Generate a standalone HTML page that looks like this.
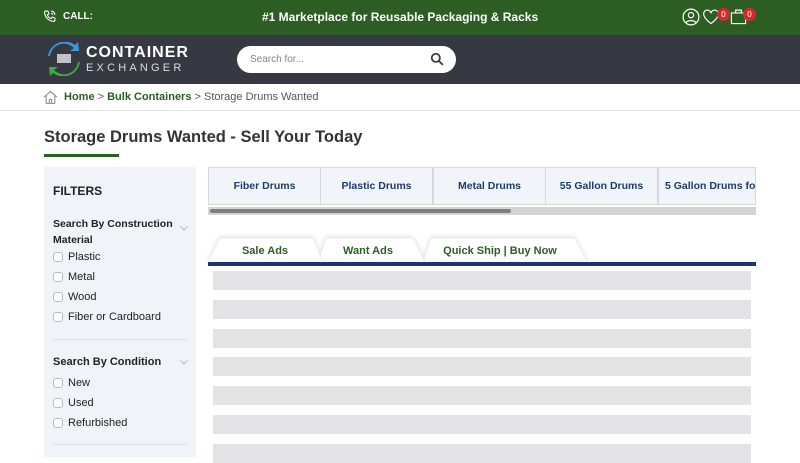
<!DOCTYPE html>
<html><head><meta charset="utf-8"><style>
*{box-sizing:border-box;margin:0;padding:0}
body{width:800px;height:450px;overflow:hidden;font-family:"Liberation Sans",sans-serif;background:#fff;position:relative}
.top{position:absolute;left:0;top:0;width:800px;height:35px;background:#2c5d23;color:#fff}
.hdr{position:absolute;left:0;top:35px;width:800px;height:49px;background:#363842}
.a{position:absolute}
.crumb{top:91px;left:64px;font-size:11px;color:#555}
.crumb b{color:#2c5d23}
.sb{position:absolute;left:44px;top:167px;width:152px;height:290px;background:#f0f3f7}
.sb .t{position:absolute;font-size:11px;color:#222;white-space:nowrap}
.cb{position:absolute;left:9px;width:10px;height:10px;border:1px solid #bbb;border-radius:3px;background:#fff}
.cat{position:absolute;top:167px;height:38px;width:113px;background:#f1f4f9;border:1px solid #d5d8de;font-size:10.5px;font-weight:bold;color:#1e3a6e;text-align:center;line-height:37px;white-space:nowrap;overflow:hidden}
.tab{position:absolute;top:245px;font-size:11px;font-weight:bold;color:#2c5d23;text-align:center}
.bar{position:absolute;left:213px;width:538px;height:19px;background:#e3e3e5}
</style></head><body>
<div class="top">
<svg class="a" style="left:43px;top:10px" width="13" height="13" viewBox="0 0 24 24" fill="none" stroke="#fff" stroke-width="2"><path d="M5 2h4l2 5-3 2a11 11 0 0 0 7 7l2-3 5 2v4a2 2 0 0 1-2 2A17 17 0 0 1 3 4a2 2 0 0 1 2-2z"/><path d="M15 2a7 7 0 0 1 7 7M15 6a3 3 0 0 1 3 3"/></svg>
<div class="a" style="left:63px;top:11px;font-size:10px;font-weight:bold">CALL:</div>
<div class="a" style="left:262px;top:10px;font-size:12px;font-weight:bold">#1 Marketplace for Reusable Packaging &amp; Racks</div>
<svg class="a" style="left:682px;top:8px" width="18" height="18" viewBox="0 0 24 24" fill="none" stroke="#fff" stroke-width="1.6"><circle cx="12" cy="12" r="10.5"/><circle cx="12" cy="9.5" r="3.5"/><path d="M5.5 19.5c2-3.5 11-3.5 13 0"/></svg>
<svg class="a" style="left:702px;top:9px" width="18" height="16" viewBox="0 0 24 22" fill="none" stroke="#fff" stroke-width="1.6"><path d="M12 20S2 13 2 7a5 5 0 0 1 10-1 5 5 0 0 1 10 1c0 6-10 13-10 13z"/></svg>
<div class="a" style="left:717px;top:8px;width:13px;height:13px;border-radius:50%;background:#d62a2a;font-size:8px;text-align:center;line-height:13px">0</div>
<svg class="a" style="left:730px;top:8px" width="17" height="17" viewBox="0 0 24 24" fill="none" stroke="#fff" stroke-width="1.6"><rect x="2" y="7" width="20" height="15"/><path d="M8 7V3h8v4"/></svg>
<div class="a" style="left:743px;top:8px;width:13px;height:13px;border-radius:50%;background:#d62a2a;font-size:8px;text-align:center;line-height:13px">0</div>
</div>
<div class="hdr">
<svg class="a" style="left:46px;top:7px" width="36" height="34" viewBox="0 0 36 34"><path d="M4 14a14 14 0 0 1 24-8l-4 3h9l-1-9-3 3A17 17 0 0 0 2 14z" fill="#3a9ad9"/><path d="M32 20a14 14 0 0 1-24 8l4-3H3l1 9 3-3a17 17 0 0 0 27-11z" fill="#3eab45"/><rect x="11" y="12" width="14" height="9" fill="#bfc3c8"/></svg>
<div class="a" style="left:86px;top:9px;font-size:16px;font-weight:bold;color:#fff;letter-spacing:1px">CONTAINER</div>
<div class="a" style="left:86px;top:27px;font-size:11px;color:#ddd;letter-spacing:3.2px">EXCHANGER</div>
<div class="a" style="left:237px;top:11px;width:219px;height:27px;background:#fff;border-radius:14px"></div>
<div class="a" style="left:250px;top:19px;font-size:10px;color:#888">Search for...</div>
<svg class="a" style="left:430px;top:17px" width="14" height="14" viewBox="0 0 24 24" fill="none" stroke="#363842" stroke-width="3"><circle cx="10" cy="10" r="7"/><path d="M15 15l7 7"/></svg>
</div>
<svg class="a" style="left:43px;top:90px" width="15" height="14" viewBox="0 0 24 22" fill="none" stroke="#777" stroke-width="1.4"><path d="M2 11L12 2l10 9M5 9v12h14V9M10 21v-6h4v6"/></svg>
<div class="a crumb"><b>Home</b> &gt; <b>Bulk Containers</b> &gt; Storage Drums Wanted</div>
<div class="a" style="left:0;top:110px;width:800px;height:1px;background:#e6e8ec"></div>
<div class="a" style="left:44px;top:128px;font-size:16.5px;font-weight:bold;color:#333">Storage Drums Wanted - Sell Your Today</div>
<div class="a" style="left:44px;top:154px;width:75px;height:3px;background:#2c5d23"></div>
<div class="sb">
<div class="t" style="left:9px;top:17px;font-size:12px;font-weight:bold">FILTERS</div>
<div class="t" style="left:9px;top:49px;font-weight:bold;line-height:16px;font-size:10.5px">Search By Construction<br>Material</div>
<svg class="a" style="left:136px;top:59px" width="8" height="5" viewBox="0 0 8 5" fill="none" stroke="#bbb"><path d="M0.5 0.5l3.5 3.5 3.5-3.5"/></svg>
<div class="cb" style="top:85px"></div><div class="t" style="left:24px;top:84px">Plastic</div>
<div class="cb" style="top:105px"></div><div class="t" style="left:24px;top:104px">Metal</div>
<div class="cb" style="top:125px"></div><div class="t" style="left:24px;top:124px">Wood</div>
<div class="cb" style="top:145px"></div><div class="t" style="left:24px;top:144px">Fiber or Cardboard</div>
<div style="position:absolute;left:9px;top:172px;width:134px;height:1px;background:#dde0e4"></div>
<div class="t" style="left:9px;top:189px;font-weight:bold">Search By Condition</div>
<svg class="a" style="left:136px;top:193px" width="8" height="5" viewBox="0 0 8 5" fill="none" stroke="#bbb"><path d="M0.5 0.5l3.5 3.5 3.5-3.5"/></svg>
<div class="cb" style="top:211px"></div><div class="t" style="left:24px;top:210px">New</div>
<div class="cb" style="top:231px"></div><div class="t" style="left:24px;top:230px">Used</div>
<div class="cb" style="top:251px"></div><div class="t" style="left:24px;top:250px">Refurbished</div>
<div style="position:absolute;left:9px;top:277px;width:134px;height:1px;background:#dde0e4"></div>
</div>
<div class="cat" style="left:208px">Fiber Drums</div>
<div class="cat" style="left:320px">Plastic Drums</div>
<div class="cat" style="left:433px">Metal Drums</div>
<div class="cat" style="left:545px">55 Gallon Drums</div>
<div class="cat" style="left:658px;width:98px;text-align:left;padding-left:6px">5 Gallon Drums for Sale</div>
<div class="a" style="left:208px;top:207px;width:548px;height:8px;background:#d4d4d4"></div>
<div class="a" style="left:210px;top:209px;width:301px;height:4px;border-radius:2px;background:#7f7f7f"></div>
<svg class="a" style="left:205px;top:232px" width="390" height="32" viewBox="0 0 390 32">
<defs><filter id="s" x="-10%" y="-50%" width="120%" height="200%"><feDropShadow dx="0" dy="-1" stdDeviation="2.5" flood-color="#000" flood-opacity="0.12"/></filter></defs>
<g filter="url(#s)" fill="#fff" stroke="#e8e8e8" stroke-width="0.8">
<path d="M218 30 L226 6 H370 L382 30 Z"/>
<path d="M113 30 L121 6 H208 L220 30 Z"/>
<path d="M3 30 L15 6 H108 L118 30 Z"/>
</g></svg>
<div class="tab" style="left:220px;width:90px">Sale Ads</div>
<div class="tab" style="left:322px;width:92px">Want Ads</div>
<div class="tab" style="left:430px;width:140px">Quick Ship | Buy Now</div>
<div class="a" style="left:208px;top:262px;width:548px;height:4px;background:#1a3570"></div>
<div class="bar" style="top:271px"></div>
<div class="bar" style="top:300px"></div>
<div class="bar" style="top:329px"></div>
<div class="bar" style="top:357px"></div>
<div class="bar" style="top:386px"></div>
<div class="bar" style="top:415px"></div>
<div class="bar" style="top:444px"></div>
</body></html>
